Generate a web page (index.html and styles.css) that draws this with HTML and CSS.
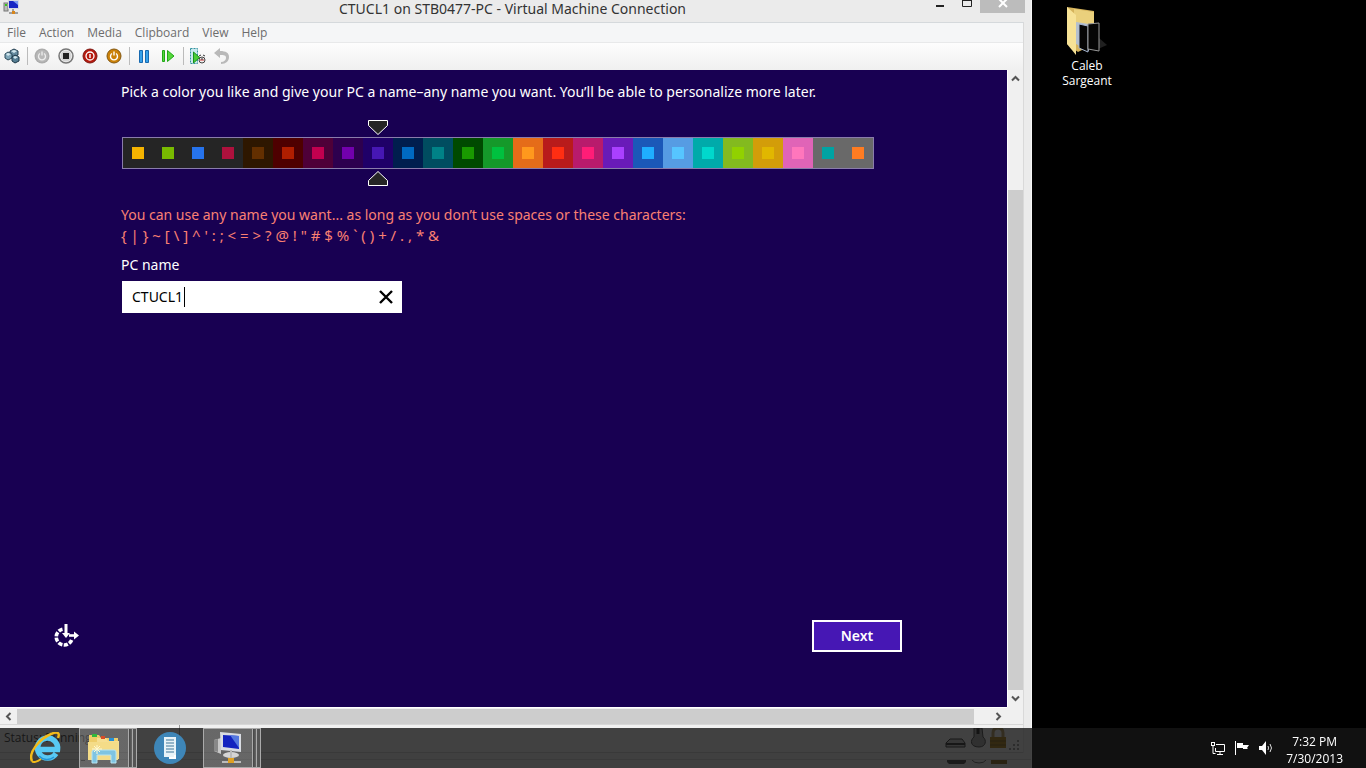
FILE: index.html
```
<!DOCTYPE html>
<html lang="en">
<head>
<meta charset="utf-8">
<title>CTUCL1 on STB0477-PC - Virtual Machine Connection</title>
<link rel="stylesheet" href="styles.css">
</head>
<body>
<div class="screen">
  <main class="window">
    <header class="titlebar">
      <svg class="app-icon" width="16" height="16" viewBox="0 0 16 16"><rect x="1" y="3" width="4" height="8" fill="#b9bdb9" stroke="#777"/><rect x="2" y="4" width="2" height="2" fill="#36c51a"/><rect x="5" y="0" width="11" height="9" fill="#d5d9e2"/><rect x="6" y="1" width="9" height="7" fill="#1726c4"/><path d="M10 1h5v4z" fill="#7d9cf0"/><path d="M10 9v3M6 13h9" stroke="#555"/><rect x="9" y="11" width="3" height="3" fill="#d9861a"/></svg>
      <h1 class="title">CTUCL1 on STB0477-PC - Virtual Machine Connection</h1>
      <div class="controls">
        <button class="control" aria-label="Minimize"><svg width="10" height="13" viewBox="0 0 10 13"><path d="M1 6h8" stroke="#222" stroke-width="2"/></svg></button>
        <button class="control" aria-label="Maximize"><svg width="10" height="13" viewBox="0 0 10 13"><path d="M.5 0v6.500h9V0" fill="none" stroke="#222"/><path d="M0 0.500h10" stroke="#222" stroke-width="1"/></svg></button>
        <button class="control close" aria-label="Close"><svg width="10" height="13" viewBox="0 0 10 13"><path d="M1-1l8 8M9-1L1 7" stroke="#fff" stroke-width="2"/></svg></button>
      </div>
    </header>
    <div class="client">
      <nav class="menu">
        <button>File</button><button>Action</button><button>Media</button><button>Clipboard</button><button>View</button><button>Help</button>
      </nav>
      <div class="toolbar">
        <div class="tools">
          <button aria-label="Ctrl+Alt+Delete"><svg width="16" height="16" viewBox="0 0 16 16"><path d="M6 3l4-2 4 2v4l-4 2-4-2z" fill="#668ca0" stroke="#233f50"/><path d="M1 6l3-2 4 2v4l-4 2-3-2z" fill="#7fa6b8" stroke="#2d4b5c"/><path d="M8 9l3-2 4 2v4l-4 2-3-2z" fill="#557e93" stroke="#1d3848"/><path d="M2 6l2-1 3 1-3 2zM7 3l3-1 3 1-3 2zM9 9l2-1 3 1-3 2z" fill="#d3e8ef"/></svg></button>
        </div>
        <span class="sep"></span>
        <div class="tools">
          <button aria-label="Start"><svg width="16" height="16" viewBox="0 0 16 16"><circle cx="8" cy="8" r="7.500" fill="#acacac"/><circle cx="8" cy="8" r="6" fill="#b8b8b8"/><path d="M6 5.500a3.500 3.500 0 1 0 4 0M8 3.500v4" fill="none" stroke="#eee" stroke-width="1.300"/></svg></button>
          <button aria-label="Turn off"><svg width="16" height="16" viewBox="0 0 16 16"><circle cx="8" cy="8" r="7" fill="#f3f3f3" stroke="#777" stroke-width="1.500"/><circle cx="8" cy="8" r="5.500" fill="#d5d5d5"/><rect x="5" y="5" width="6" height="6" fill="#222"/></svg></button>
          <button aria-label="Shut down"><svg width="16" height="16" viewBox="0 0 16 16"><circle cx="8" cy="8" r="7" fill="#b6190e" stroke="#7d1712"/><circle cx="8" cy="8" r="4" fill="none" stroke="#fff" stroke-width="1.300"/><path d="M8 6v4" stroke="#fff" stroke-width="1.400"/></svg></button>
          <button aria-label="Save"><svg width="16" height="16" viewBox="0 0 16 16"><circle cx="8" cy="8" r="7" fill="#cb8108" stroke="#835711"/><path d="M6 5.500a3.500 3.500 0 1 0 4 0M8 3.500v4" fill="none" stroke="#fff" stroke-width="1.400"/></svg></button>
        </div>
        <span class="sep"></span>
        <div class="tools">
          <button aria-label="Pause"><svg width="16" height="16" viewBox="0 0 16 16"><path d="M3.500 2.500h3v12h-3zM9.500 2.500h3v12h-3z" fill="#36a1ea" stroke="#1769b0"/></svg></button>
          <button aria-label="Reset"><svg width="16" height="16" viewBox="0 0 16 16"><path d="M2.500 2.500h2v11h-2zM7.500 2.500v11l6.500-5.500z" fill="#55d83b" stroke="#20a718"/></svg></button>
        </div>
        <span class="sep"></span>
        <div class="tools">
          <button aria-label="Snapshot"><svg width="16" height="16" viewBox="0 0 16 16"><path d="M.5.500h7v15h-7z" fill="#c9e9ed" stroke="#3293a0" stroke-dasharray="2 1"/><circle cx="12" cy="12" r="3" fill="#eee" stroke="#444"/><path d="M3.500 4v11l6-5.500z" fill="#4ccc35" stroke="#16931a"/><path d="M10 12h4" stroke="#c33"/><path d="M12 10v2M9 8l2-1M13 7l2 1" stroke="#333"/></svg></button>
          <button aria-label="Revert"><svg width="16" height="16" viewBox="0 0 16 16"><path d="M0 5l6-5v3c6 0 9 2 9 6s-3 7-8 7v-2c3 0 5-2 5-4 0-3-2-3-6-3v3z" fill="#b9b9b9"/></svg></button>
        </div>
      </div>
      <div class="viewport">
        <section class="setup">
          <p class="intro">Pick a color you like and give your PC a name–any name you want. You’ll be able to personalize more later.</p>
          <div class="picker">
            <svg class="marker" width="20" height="15" viewBox="0 0 20 15"><path d="M.5.500h19v5L10 14.500.5 5.500z" fill="#252525" stroke="#fff"/></svg>
            <div class="swatches" role="radiogroup" aria-label="Color">
              <input type="radio" name="color" aria-label="Color 1" class="s1">
              <input type="radio" name="color" aria-label="Color 2" class="s2">
              <input type="radio" name="color" aria-label="Color 3" class="s3">
              <input type="radio" name="color" aria-label="Color 4" class="s4">
              <input type="radio" name="color" aria-label="Color 5" class="s5">
              <input type="radio" name="color" aria-label="Color 6" class="s6">
              <input type="radio" name="color" aria-label="Color 7" class="s7">
              <input type="radio" name="color" aria-label="Color 8" class="s8">
              <input type="radio" name="color" aria-label="Color 9" class="s9" checked>
              <input type="radio" name="color" aria-label="Color 10" class="s10">
              <input type="radio" name="color" aria-label="Color 11" class="s11">
              <input type="radio" name="color" aria-label="Color 12" class="s12">
              <input type="radio" name="color" aria-label="Color 13" class="s13">
              <input type="radio" name="color" aria-label="Color 14" class="s14">
              <input type="radio" name="color" aria-label="Color 15" class="s15">
              <input type="radio" name="color" aria-label="Color 16" class="s16">
              <input type="radio" name="color" aria-label="Color 17" class="s17">
              <input type="radio" name="color" aria-label="Color 18" class="s18">
              <input type="radio" name="color" aria-label="Color 19" class="s19">
              <input type="radio" name="color" aria-label="Color 20" class="s20">
              <input type="radio" name="color" aria-label="Color 21" class="s21">
              <input type="radio" name="color" aria-label="Color 22" class="s22">
              <input type="radio" name="color" aria-label="Color 23" class="s23">
              <input type="radio" name="color" aria-label="Color 24" class="s24">
              <input type="radio" name="color" aria-label="Color 25" class="s25">
            </div>
            <svg class="marker" width="20" height="15" viewBox="0 0 20 15"><path d="M.5 14.500h19v-5L10 .5.500 9.500z" fill="#252525" stroke="#fff"/></svg>
          </div>
          <p class="warning">You can use any name you want... as long as you don’t use spaces or these characters:</p>
          <p class="warning chars">{ | } ~ [ \ ] ^ ' : ; &lt; = &gt; ? @ ! " # $ % ` ( ) + / . , * &amp;</p>
          <label class="label" for="pcname">PC name</label>
          <div class="field">
            <div class="entry"><input id="pcname" type="text" value="CTUCL1" size="6"><span class="caret"></span></div>
            <button class="clear" aria-label="Clear"><svg width="14" height="14" viewBox="0 0 14 14"><path d="M1 1l12 12M13 1L1 13" stroke="#000" stroke-width="2.400"/></svg></button>
          </div>
          <footer class="actions">
            <button class="ease" aria-label="Ease of access"><svg width="26" height="26" viewBox="0 0 26 26" fill="none" stroke="#fff"><path d="M9.500 6.200A8 8 0 1 0 19 16" stroke-width="3.600" stroke-dasharray="4.200 1.400"/><path d="M13 1v10" stroke-width="3"/><path d="M9 10h8l-4 5z" fill="#fff" stroke="none"/><path d="M16 12.500h7" stroke-width="2.600"/><path d="M21 8.500v8l5-4z" fill="#fff" stroke="none"/></svg></button>
            <button class="next">Next</button>
          </footer>
        </section>
        <div class="vscroll">
          <button aria-label="Scroll up"><svg width="9" height="7" viewBox="0 0 9 7"><path d="M1 5.500L4.500 2 8 5.500" fill="none" stroke="#555" stroke-width="2"/></svg></button>
          <div class="vthumb"></div>
          <button aria-label="Scroll down"><svg width="9" height="7" viewBox="0 0 9 7"><path d="M1 1.500L4.500 5 8 1.500" fill="none" stroke="#555" stroke-width="2"/></svg></button>
        </div>
      </div>
      <div class="hscroll">
        <button aria-label="Scroll left"><svg width="7" height="9" viewBox="0 0 7 9"><path d="M5.500 1L2 4.500 5.500 8" fill="none" stroke="#555" stroke-width="2"/></svg></button>
        <div class="hthumb"></div>
        <button aria-label="Scroll right"><svg width="7" height="9" viewBox="0 0 7 9"><path d="M1.500 1L5 4.500 1.500 8" fill="none" stroke="#555" stroke-width="2"/></svg></button>
      </div>
      <div class="status">
        <span class="status-text">Status: Running</span>
        <svg width="78" height="22" viewBox="0 0 78 22"><path d="M1 19v-4l4-4h12l3 4v4z" fill="#bbb" stroke="#222"/><path d="M1 16h19" stroke="#222" stroke-width="2"/><path d="M29 0h8l1 9c4 3 3 10-4 10-9 0-9-7-5-10z" fill="#999" stroke="#333"/><path d="M33 0v6" stroke="#111" stroke-width="3"/><path d="M48 10V5q0-5 5-5t5 5v5" fill="none" stroke="#a98d4e" stroke-width="3"/><path d="M45 9h16v11H45z" fill="#a47500"/><path d="M45 13h16M45 17h16" stroke="#6b4a00"/><path d="M72 12h2v2h-2zM68 16h2v2h-2zM72 16h2v2h-2zM64 20h2v2h-2zM68 20h2v2h-2zM72 20h2v2h-2z" fill="#888"/></svg>
      </div>
    </div>
    <div class="window-base">
      <span class="dash"></span>
      <svg width="78" height="4" viewBox="0 0 78 4"><path d="M1 0h19v2l-2 2H3L1 2z" fill="#333"/><path d="M26 0q2 3 7 3t7-3" fill="none" stroke="#555"/><path d="M45 0h16v4H45z" fill="#7d5b0c"/></svg>
    </div>
  </main>
  <aside class="desktop">
    <a class="shortcut" href="#folder">
      <svg width="42" height="50" viewBox="0 0 42 50"><path d="M32 43l9-4-8-7z" fill="#202020"/><path d="M1 1l27 4v33L12 46 1 38z" fill="#d5b35b"/><path d="M8 3l20 3v15H8z" fill="#ead07c"/><path d="M10 16l13 2v27l-13-7z" fill="#b5c0ce"/><path d="M13 18l9 2v26l-9-4z" fill="#050505" stroke="#a9b8d2"/><path d="M22 18l11-1v28l-11-2z" fill="#050505" stroke="#999"/><path d="M1 1l9 8v40L1 38z" fill="#f7e296"/></svg>
      <span>Caleb<br>Sargeant</span>
    </a>
  </aside>
</div>
<footer class="taskbar">
  <div class="tasks">
    <button class="task" aria-label="Internet Explorer"><svg width="32" height="32" viewBox="0 0 32 32"><path d="M26 21.500a10 10 0 1 1 1.500-4H9" fill="none" stroke="#58c9f3" stroke-width="5.500"/><path d="M24 25a11 11 0 0 1-15-1" fill="none" stroke="#2395d7" stroke-width="1.500"/><path d="M2 29C-2 21 9 7 21 2c7-3 9-1 7 4" fill="none" stroke="#f2ba19" stroke-width="2.500"/><path d="M2 29c1 2 5 1 9-2" fill="none" stroke="#f2ba19" stroke-width="2"/></svg></button>
    <button class="task open" aria-label="File Explorer"><svg width="34" height="32" viewBox="0 0 34 32"><path d="M2 3h10l2 3h17v21H2z" fill="#eecd69"/><path d="M5 2h5v3H5z" fill="#31b83c"/><path d="M10 6h9l2 3h11v18H10z" fill="#f6de91"/><path d="M14 4h4v3h-4z" fill="#d94d26"/><path d="M22 6h5v3h-5z" fill="#2690d6"/><path d="M1 10h30v18H1z" fill="#f4dc88"/><path d="M5 31V20q0-2 2-2h20q2 0 2 2v11h-5v-8H10v8z" fill="#7fc4e2" stroke="#b6e4f2"/><path d="M10 13v9M5 17h10M7 14l6 6M13 14l-6 6" stroke="#fff8d0"/></svg></button>
    <button class="task" aria-label="Server application"><svg width="32" height="32" viewBox="0 0 32 32"><circle cx="16" cy="16" r="16" fill="#3e86b8"/><rect x="10" y="5" width="12" height="20" fill="#e8f3f8"/><path d="M12 8h8M12 11h8M12 14h8M12 17h8M12 20h8" stroke="#3e7699"/><path d="M15 26h6v-3" fill="none" stroke="#fff" stroke-width="2"/></svg></button>
    <button class="task open" aria-label="Virtual Machine Connection"><svg width="28" height="32" viewBox="0 0 28 32"><path d="M0 8l7-2v16l-7-3z" fill="#c8c8c8"/><path d="M0 8l4-1v13l-4-1z" fill="#888"/><path d="M6 0l21 2v18L7 18z" fill="#d9dce2"/><path d="M9 3l16 1v13L9 15z" fill="#1323bf"/><path d="M16 3l9 1v12z" fill="#5478df"/><ellipse cx="17" cy="23" rx="8" ry="3" fill="#d5d5d5"/><path d="M17 18v9M8 30h19" stroke="#bbb" stroke-width="2"/><rect x="14" y="26" width="6" height="5" fill="#dfa023"/></svg></button>
  </div>
  <div class="tray">
    <svg width="16" height="16" viewBox="0 0 16 16" fill="none" stroke="#fff"><path d="M6 4.500h8.500v7H5.500V8M10 12v2M7 14.500h6"/><rect x="1.500" y="2.500" width="3" height="3"/><path d="M3 6v7.500h2.500"/></svg>
    <svg width="16" height="16" viewBox="0 0 16 16"><path d="M1.500 1v14" stroke="#fff"/><path d="M3 3h6v2h6l-2 3 1 1H9V8H3z" fill="#fff"/></svg>
    <svg width="16" height="16" viewBox="0 0 16 16"><path d="M1 6h3l4-5v14l-4-5H1z" fill="#fff"/><path d="M10 6q1 2 0 4M12 4q3 4 0 8" fill="none" stroke="#ddd"/></svg>
    <time class="clock" datetime="2013-07-30T19:32">7:32 PM<br>7/30/2013</time>
  </div>
</footer>
</body>
</html>
```
FILE: styles.css
```
* { box-sizing: border-box; }
body { margin: 0; background: #000; font-family: "Open Sans", "Noto Sans", sans-serif; font-size: 12px; }
button { margin: 0; padding: 0; border: 0; background: none; color: inherit; font: inherit; display: flex; align-items: center; justify-content: center; }
p, h1 { margin: 0; }
svg { display: block; flex: none; }

.screen { height: 100vh; display: grid; grid-template-columns: minmax(0, 1fr) 334px; overflow: hidden; }
.window { display: flex; flex-direction: column; min-height: 0; background: #ebebeb; border-right: 1px solid #f7f7f7; }
.titlebar { display: grid; grid-template-columns: 110px 1fr 110px; height: 22px; align-items: start; padding-right: 6px; }
.app-icon { margin-left: 3px; }
.title { font-family: "Noto Sans", sans-serif; font-size: 14px; font-weight: 400; line-height: 18px; color: #333; text-align: center; white-space: nowrap; }
.controls { display: flex; justify-content: flex-end; }
.control { width: 27px; height: 13px; }
.control.close { width: 45px; background: #bcbcbc; }

.client { flex: 1; display: flex; flex-direction: column; min-height: 0; margin-right: 7px; background: #f0f0f0; border-top: 1px solid #d5d9dc; border-right: 1px solid #d9d9d9; }
.menu { display: flex; gap: 13px; height: 19px; padding-left: 7px; background: #f5f6f7; color: #6d6d6d; }
.toolbar { display: flex; align-items: center; height: 28px; padding: 0 0 2px 4px; border-top: 1px solid #e8e9ea; background: linear-gradient(#fdfdfd, #f0f0f0); }
.tools { display: flex; gap: 8px; }
.sep { width: 14px; height: 18px; background: linear-gradient(#bbb, #bbb) center / 1px 100% no-repeat; }

.viewport { flex: 1; display: flex; min-height: 0; }
.setup { flex: 1; display: flex; flex-direction: column; padding: 12px 0 0 121px; background: #180052; color: #fff; font-family: "Noto Sans", sans-serif; font-size: 14px; line-height: 20px; }
.picker { display: grid; grid-template-columns: repeat(25, 30px); row-gap: 2px; margin: 18px 0 19px 1px; padding: 0 1px; }
.marker { grid-column: 9; justify-self: center; }
.swatches { grid-column: 1 / -1; display: flex; margin: 0 -1px; border: 1px solid #8a7cab; }
.swatches input { appearance: none; flex: 1; height: 30px; margin: 0; padding: 9px; background-clip: border-box; }
.swatches input::before { content: ""; display: block; width: 12px; height: 12px; background: var(--accent); }
.s1 { background: #252525; --accent: #f4b300; }
.s2 { background: #252525; --accent: #78ba00; }
.s3 { background: #252525; --accent: #2673ec; }
.s4 { background: #252525; --accent: #ae113d; }
.s5 { background: #2e1700; --accent: #632f00; }
.s6 { background: #4e0000; --accent: #b01e00; }
.s7 { background: #4e0038; --accent: #c1004f; }
.s8 { background: #2d004e; --accent: #7200ac; }
.s9 { background: #1f0068; --accent: #4617b4; }
.s10 { background: #001e4e; --accent: #006ac1; }
.s11 { background: #004d60; --accent: #008287; }
.s12 { background: #004a00; --accent: #199900; }
.s13 { background: #15992a; --accent: #00c13f; }
.s14 { background: #e56c19; --accent: #ff981d; }
.s15 { background: #b81b1b; --accent: #ff2e12; }
.s16 { background: #b81b6c; --accent: #ff1d77; }
.s17 { background: #691bb8; --accent: #aa40ff; }
.s18 { background: #1b58b8; --accent: #1faeff; }
.s19 { background: #569ce3; --accent: #56c5ff; }
.s20 { background: #00aaaa; --accent: #00d8cc; }
.s21 { background: #83ba1f; --accent: #91d100; }
.s22 { background: #d39d09; --accent: #e1b700; }
.s23 { background: #e064b7; --accent: #ff76bc; }
.s24 { background: #696969; --accent: #00a3a3; }
.s25 { background: #696969; --accent: #fe7c22; }
.warning { color: #fa8072; }
.chars { font-size: 15px; }
.label { margin: 10px 0 6px; }
.field { display: flex; justify-content: space-between; width: 280px; height: 32px; margin-left: 1px; background: #fff; color: #000; }
.entry { display: flex; align-items: center; padding-left: 10px; }
.entry input { width: 52px; padding: 0; border: 0; outline: 0; background: none; font: inherit; }
.caret { width: 1px; height: 20px; background: #000; }
.clear { width: 32px; }
.actions { display: flex; align-items: center; justify-content: space-between; margin: auto 105px 55px -68px; }
.next { width: 90px; height: 32px; border: 2px solid #fff; background: #4617b4; font-weight: 600; }

.vscroll { width: 16px; display: flex; flex-direction: column; border-left: 1px solid #fff; }
.vscroll button { height: 17px; }
.vthumb { flex: 1; margin-top: 103px; background: #cdcdcd; }
.hscroll { height: 17px; display: flex; margin-right: 16px; border-top: 1px solid #fff; }
.hscroll button { width: 17px; }
.hthumb { flex: 1; margin: 1px 16px 0 0; background: #cdcdcd; }
.status { display: flex; justify-content: space-between; height: 29px; padding-left: 4px; border-top: 1px solid #d7d7d7; border-bottom: 1px solid #c8c8c8; background: linear-gradient(#999, #999) 179px 0 / 1px 100% no-repeat; }
.status-text { color: #222; line-height: 26px; }
.status svg { margin-top: 3px; }
.window-base { display: flex; justify-content: space-between; height: 15px; padding: 7px 7px 0 81px; background: linear-gradient(#ccc, #ccc) 0 6px / 100% 1px no-repeat; }
.dash { width: 4px; height: 1px; background: #333; }

.desktop { padding: 6px 0 0 18px; color: #fff; }
.shortcut { width: 74px; display: flex; flex-direction: column; align-items: center; gap: 2px; color: #fff; font-size: 12px; line-height: 15px; text-align: center; text-decoration: none; }

.taskbar { position: fixed; left: 0; right: 0; bottom: 0; height: 40px; display: flex; justify-content: space-between; background: rgba(21, 21, 21, .8); color: #fff; }
.tasks { display: flex; padding-left: 21px; }
.task { width: 50px; height: 40px; }
.task.open { width: 58px; margin-left: 8px; padding-right: 8px; border: 1px solid #aaa; background: linear-gradient(90deg, rgba(255,255,255,.2) 48px, #aaa 48px, #aaa 49px, #444 49px, #666 52px, #aaa 52px, #aaa 53px, #555 53px); }
.task.open + .task { margin-left: 8px; }
.tray { display: flex; align-items: center; gap: 8px; padding-right: 23px; }
.clock { margin-left: 4px; font-size: 12px; line-height: 17px; text-align: center; padding-top: 4px; }
```
